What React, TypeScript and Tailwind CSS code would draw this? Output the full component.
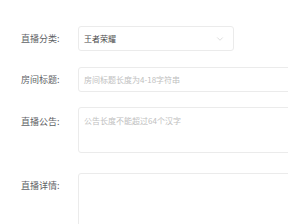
import { ChevronDown } from 'lucide-react'

const FONT = "font-['Noto_Sans_CJK_SC','Noto_Sans',sans-serif]"

function Label({ text, className = '' }: { text: string; className?: string }) {
  return (
    <div className={`w-[57px] shrink-0 text-[9px] leading-[25px] text-[#606266] ${className}`}>
      {text}
    </div>
  )
}

export default function App() {
  return (
    <div className={`h-[224px] w-[288px] overflow-hidden bg-white pl-[21px] pt-[26px] ${FONT}`}>
      {/* 直播分类 */}
      <div className="flex">
        <Label text="直播分类:" />
        <div className="flex h-[25px] w-[156px] items-center justify-between rounded-[3px] border border-[#ebebeb] pl-[5px] pr-[8px]">
          <span className="text-[8px] text-[#4a4a4a]">王者荣耀</span>
          <ChevronDown className="h-[10px] w-[10px] text-[#c8c8c8]" strokeWidth={1.5} />
        </div>
      </div>

      {/* 房间标题 */}
      <div className="mt-[16px] flex">
        <Label text="房间标题:" />
        <div className="flex h-[25px] w-[260px] shrink-0 items-center rounded-[3px] border border-[#ebebeb] pl-[5px]">
          <span className="text-[8px] text-[#c0c0c0]">房间标题长度为4-18字符串</span>
        </div>
      </div>

      {/* 直播公告 */}
      <div className="mt-[15px] flex">
        <Label text="直播公告:" className="pt-[2px]" />
        <div className="h-[46px] w-[260px] shrink-0 rounded-[3px] border border-[#ebebeb] pl-[5px] pt-[7px]">
          <span className="block text-[8px] leading-[12px] text-[#c0c0c0]">公告长度不能超过64个汉字</span>
        </div>
      </div>

      {/* 直播详情 */}
      <div className="mt-[20px] flex">
        <Label text="直播详情:" />
        <div className="h-[80px] w-[260px] shrink-0 rounded-[3px] border border-[#ebebeb]" />
      </div>
    </div>
  )
}
